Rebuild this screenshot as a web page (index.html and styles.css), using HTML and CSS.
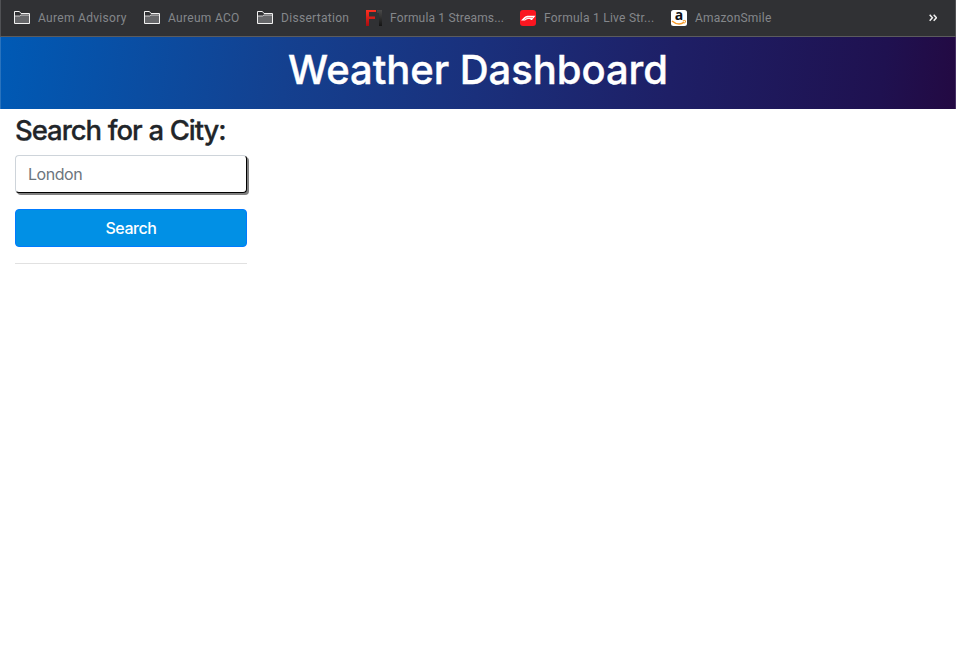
FILE: index.html
```html
<!DOCTYPE html>
<html lang="en">
<head>
<meta charset="utf-8">
<title>Weather Dashboard</title>
<link rel="stylesheet" href="styles.css">
</head>
<body>
<svg width="0" height="0" class="defs">
  <symbol id="folder" viewBox="0 0 16 13">
    <path d="M.5 12.5V.5H5.4L7 2.5H15.5V12.5Z" fill="#303134" stroke="#f1f1f1"/>
    <path d="M1 5H5.5L7 4H15V12H1Z" fill="#66676a"/>
    <path d="M1 5H5.5L7 4H15" fill="none" stroke="#f1f1f1" stroke-width=".8"/>
  </symbol>
</svg>
<nav class="bookmarks">
  <a class="bookmark advisory"><svg class="folder"><use href="#folder"/></svg><span>Aurem Advisory</span></a>
  <a class="bookmark aco"><svg class="folder"><use href="#folder"/></svg><span>Aureum ACO</span></a>
  <a class="bookmark dissertation"><svg class="folder"><use href="#folder"/></svg><span>Dissertation</span></a>
  <a class="bookmark streams">
    <svg class="favicon" viewBox="0 0 16 16">
      <defs>
        <linearGradient id="red" x2="0" y2="1"><stop stop-color="#ff3020"/><stop offset="1" stop-color="#a80c10"/></linearGradient>
        <linearGradient id="dark" x2="0" y2="1"><stop stop-color="#4a4a4a"/><stop offset="1" stop-color="#141414"/></linearGradient>
      </defs>
      <path d="M0 0H10V2H3V6.5H9V9H3V16H0Z" fill="url(#red)"/>
      <path d="M11 0H16V16H13V3H11Z" fill="url(#dark)"/>
    </svg><span>Formula 1 Streams...</span></a>
  <a class="bookmark live">
    <svg class="favicon" viewBox="0 0 16 16">
      <rect width="16" height="16" rx="3" fill="#fb1620"/>
      <path d="M1 10.5L4.2 7.2Q5.5 5.7 7.5 5.7H15.5L12 10H10L11 9H8Q6.5 9 5 10.5Z" fill="#fff"/>
      <path d="M4.4 9.8Q5.6 7.6 7.5 7.6H13" fill="none" stroke="#fb1620" stroke-width=".5"/>
    </svg><span>Formula 1 Live Str...</span></a>
  <a class="bookmark smile">
    <svg class="favicon" viewBox="0 0 16 16">
      <rect width="16" height="16" rx="2.5" fill="#fff"/>
      <text x="8" y="10" text-anchor="middle" class="amazon-a">a</text>
      <path d="M1 11Q7.5 16.4 13.2 12.2" fill="none" stroke="#f79a2a" stroke-width="1.5"/>
      <path d="M11.7 10.8Q14.5 10.1 14.6 10.8Q14.6 12 13.5 13.4" fill="none" stroke="#f79a2a"/>
    </svg><span>AmazonSmile</span></a>
  <svg class="more" viewBox="0 0 8 8"><path d="M.7 .8L3.4 3.8L.7 6.8M4.7 .8L7.4 3.8L4.7 6.8" fill="none" stroke="#f1f1f1" stroke-width="1.5"/></svg>
</nav>
<header class="banner"><h1>Weather Dashboard</h1></header>
<main class="search">
  <h2>Search for a City:</h2>
  <input class="city" type="text" placeholder="London">
  <button class="submit" type="button">Search</button>
  <hr>
</main>
</body>
</html>
```
FILE: styles.css
```css
* { box-sizing: border-box; }
body {
  margin: 0;
  background: #fff;
  color: #212529;
  font-family: Inter, "Liberation Sans", sans-serif;
}
.defs { display: block; }
.bookmarks {
  display: flex;
  align-items: center;
  height: 37px;
  padding: 0 19px 1px 14px;
  gap: 16px;
  background: #303134;
  border-bottom: 1px solid #5b5b5d;
  box-shadow: inset 1px 0 #505154, inset -1px 0 #505154;
}
.bookmark {
  display: flex;
  align-items: center;
  gap: 8px;
  flex: none;
  font: 12px/16px Roboto, sans-serif;
  letter-spacing: .3px;
  color: #84878b;
  white-space: nowrap;
}
.folder { flex: none; width: 16px; height: 13px; }
.favicon { flex: none; width: 16px; height: 16px; overflow: visible; }
.advisory { width: 114px; }
.aco { width: 97px; }
.dissertation { width: 93px; }
.streams { width: 138px; letter-spacing: .17px; }
.live { width: 135px; letter-spacing: .25px; }
.smile { letter-spacing: .22px; }
.amazon-a { font: bold 14px "Open Sans", sans-serif; letter-spacing: 0; fill: #111; }
.more { width: 8px; height: 8px; margin-left: auto; }
.banner {
  height: 72px;
  padding-top: 9px;
  background: linear-gradient(97deg, #005ab5, #14408f 30%, #1a307c 50%, #1e1f66 70%, #1f1150 92%, #230942);
  box-shadow: inset 1px 0 #2a73bd, inset -1px 0 #453064;
}
h1 {
  margin: 0;
  font-size: 40px;
  font-weight: 500;
  line-height: 48px;
  letter-spacing: -.05px;
  text-align: center;
  color: #fff;
  -webkit-text-stroke: .4px #fff;
}
.search {
  width: 247px;
  padding: 5px 0 0 15px;
}
h2 {
  margin: 0 0 8px;
  font-size: 27.5px;
  font-weight: 500;
  line-height: 33px;
  letter-spacing: -1.05px;
  word-spacing: .5px;
  white-space: nowrap;
  -webkit-text-stroke: .3px #212529;
}
.city, .submit {
  display: block;
  width: 100%;
  height: 38px;
  font-family: inherit;
  font-size: 16px;
  letter-spacing: -.45px;
  border-radius: 4px;
}
.city {
  padding: 0 12px;
  border: 1px solid #ced4da;
  border-right-color: #000;
  border-bottom-color: #000;
  box-shadow: 2px 2px 0 #808080;
}
.city::placeholder { color: #6c757d; opacity: 1; }
.submit {
  margin: 16px 0;
  border: 1px solid #007bff;
  background: #0190e5;
  color: #fff;
  font-weight: 500;
}
hr {
  margin: 0;
  border: 0;
  border-top: 1px solid #e1e1e1;
}
```
